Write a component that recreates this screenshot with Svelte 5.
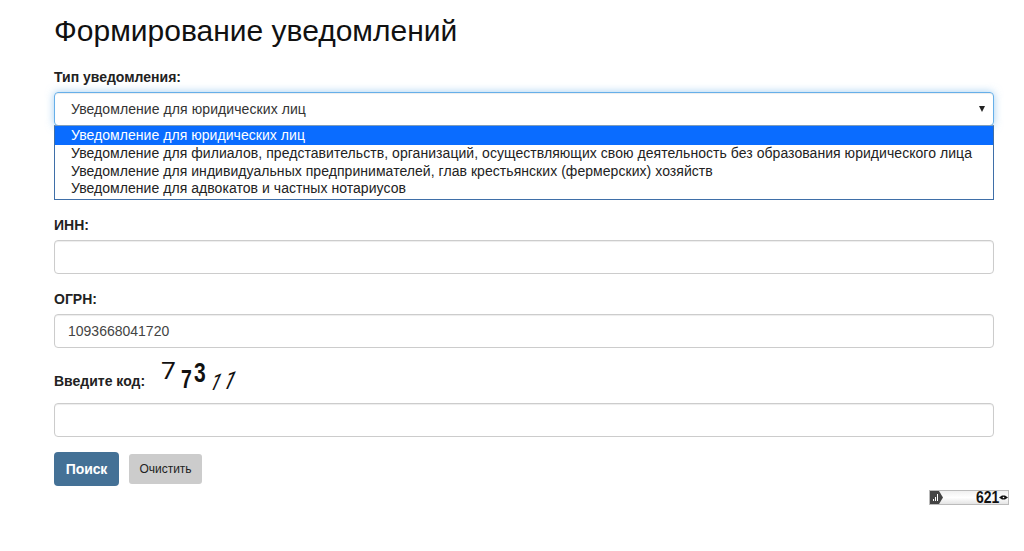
<script>
  const options = [
    'Уведомление для юридических лиц',
    'Уведомление для филиалов, представительств, организаций, осуществляющих свою деятельность без образования юридического лица',
    'Уведомление для индивидуальных предпринимателей, глав крестьянских (фермерских) хозяйств',
    'Уведомление для адвокатов и частных нотариусов',
  ];
</script>

<main class="page">
  <h1>Формирование уведомлений</h1>

  <div class="group type-group">
    <span class="label">Тип уведомления:</span>
    <div class="select-wrap">
      <div class="select">
        <span>{options[0]}</span>
        <i class="arrow"></i>
      </div>
      <ul class="list">
        {#each options as opt, i}
          <li class:active={i === 0}>{opt}</li>
        {/each}
      </ul>
    </div>
  </div>

  <div class="group">
    <span class="label">ИНН:</span>
    <div class="input"></div>
  </div>

  <div class="group">
    <span class="label">ОГРН:</span>
    <div class="input">1093668041720</div>
  </div>

  <div class="captcha-row">
    <span class="label">Введите код:</span>
    <div class="captcha">
      <span class="d thin seven">7</span>
      <span class="d bold seven2">7</span>
      <span class="d bold three">3</span>
      <span class="d thin one">1</span>
      <span class="d thin one2">1</span>
    </div>
  </div>
  <div class="input code"></div>

  <div class="actions">
    <button class="search">Поиск</button>
    <button class="clear">Очистить</button>
  </div>

  <div class="counter-row">
    <div class="counter">
      <span class="badge">
        <svg viewBox="0 0 14 13" width="14" height="13">
          <path d="M0 0H9L13 6.5L9 13H0Z" fill="#444" />
          <path d="M3 10V8H4V10ZM5 10V6H6V10ZM7 10V3H8V10Z" fill="#fff" />
        </svg>
      </span>
      <span class="count">621</span>
      <svg class="eye" viewBox="0 0 9 5" width="9" height="5">
        <path d="M0 2.5L3 0.5H6L9 2.5L6 4.5H3Z" fill="#111" />
        <circle cx="4.5" cy="2.5" r="0.8" fill="#fff" />
      </svg>
    </div>
  </div>
</main>

<style>
  :global(body) {
    margin: 0;
    background: #fff;
    color: #333;
    font-family: "Liberation Sans", Arial, sans-serif;
  }

  .page {
    padding: 0 30px 0 54px;
    height: 551px;
    box-sizing: border-box;
    overflow: hidden;
  }

  h1 {
    margin: 0;
    padding-top: 13px;
    font-size: 30px;
    line-height: 36px;
    font-weight: 400;
    color: #111;
  }

  .label {
    display: block;
    font-size: 14px;
    line-height: 20px;
    font-weight: 700;
    color: #222;
  }

  .group {
    margin-top: 15px;
  }
  .group .label {
    margin-bottom: 5px;
  }

  .type-group {
    margin-top: 18px;
    margin-bottom: 89px;
  }
  .type-group .label {
    margin-bottom: 5px;
  }

  .select-wrap {
    position: relative;
  }

  .select {
    height: 34px;
    box-sizing: border-box;
    border: 1px solid #66afe9;
    border-radius: 4px;
    box-shadow: inset 0 1px 1px rgba(0, 0, 0, .075), 0 0 8px rgba(102, 175, 233, .6);
    padding: 0 8px 0 16px;
    display: flex;
    align-items: center;
    justify-content: space-between;
    font-size: 14px;
    letter-spacing: .08px;
    color: #333;
  }

  .arrow {
    width: 0;
    height: 0;
    border-left: 3px solid transparent;
    border-right: 3px solid transparent;
    border-top: 6px solid #222;
  }

  .list {
    position: absolute;
    top: 33px;
    left: 0;
    right: 0;
    margin: 0;
    padding: 0;
    list-style: none;
    background: #fff;
    border: 1px solid #3f6fa8;
    border-top: 1px solid #7f9db9;
    box-sizing: border-box;
    height: 75px;
    font-size: 14px;
    letter-spacing: .05px;
    line-height: 17.5px;
    color: #222;
  }
  .list li {
    padding-left: 16px;
    white-space: nowrap;
  }
  .list li.active {
    height: 19px;
    line-height: 18px;
    background: #0a6cff;
    color: #fff;
  }

  .input {
    height: 34px;
    box-sizing: border-box;
    border: 1px solid #ccc;
    border-radius: 4px;
    box-shadow: inset 0 1px 1px rgba(0, 0, 0, .075);
    padding: 0 13px;
    font-size: 14px;
    line-height: 32px;
    color: #444;
  }

  .captcha-row {
    display: flex;
    align-items: flex-end;
    margin-top: 7px;
    height: 40px;
  }
  .captcha-row .label {
    margin-bottom: 4px;
  }

  .captcha {
    position: relative;
    width: 90px;
    height: 40px;
    margin-left: 14px;
    color: #111;
  }
  .d {
    position: absolute;
    line-height: 1;
    transform-origin: left top;
  }
  .thin {
    font-weight: 400;
    font-family: Roboto, sans-serif;
  }
  .bold {
    font-weight: 700;
  }
  .seven {
    left: 2px;
    top: 5px;
    font-size: 23px;
    transform: scaleX(1.15);
  }
  .seven2 {
    left: 22px;
    top: 12px;
    font-size: 25px;
    transform: scaleX(.78);
  }
  .three {
    left: 35px;
    top: 5px;
    font-size: 27px;
    transform: scaleX(.78);
  }
  .one {
    left: 57px;
    top: 16px;
    font-size: 23px;
    transform: skewX(-24deg) scaleX(.8);
  }
  .one2 {
    left: 71px;
    top: 13px;
    font-size: 25px;
    transform: skewX(-24deg) scaleX(.8);
  }

  .code {
    margin-top: 8px;
  }

  .actions {
    display: flex;
    align-items: center;
    gap: 10px;
    margin-top: 15px;
  }

  button {
    border: 0;
    font-family: inherit;
    padding: 0;
  }
  .search {
    width: 65px;
    height: 34px;
    border-radius: 4px;
    background: #447196;
    color: #fff;
    font-size: 14px;
    font-weight: 700;
    letter-spacing: -.1px;
  }
  .clear {
    width: 73px;
    height: 30px;
    border-radius: 3px;
    background: #ccc;
    color: #222;
    font-size: 12px;
  }

  .counter-row {
    display: flex;
    justify-content: flex-end;
    margin: 4px -15px 0 0;
  }
  .counter {
    width: 80px;
    height: 15px;
    box-sizing: border-box;
    display: flex;
    align-items: center;
    border: 1px solid #bbb;
    background: linear-gradient(#f0f0f0, #fff 50%, #e4e4e4);
    font-family: "Liberation Sans", sans-serif;
  }
  .badge {
    display: flex;
  }
  .count {
    margin-left: auto;
    font-size: 17px;
    line-height: 13px;
    font-weight: 700;
    color: #111;
    transform: scaleX(.82);
    transform-origin: right center;
  }
  .eye {
    margin: 0;
  }
</style>
